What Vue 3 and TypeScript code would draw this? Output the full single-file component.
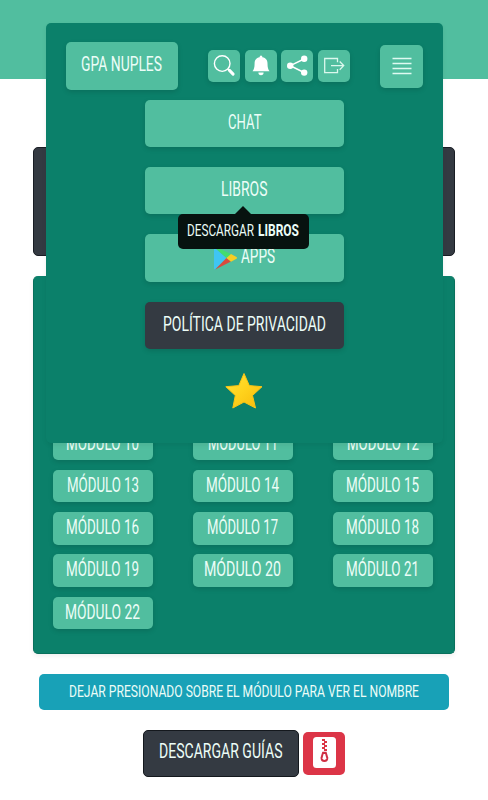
<script setup lang="ts">
import { h } from 'vue'

interface LabelProps { text: string; w: number; size?: number; bold?: boolean }

// Condensed caption: the glyphs are fitted to the requested width.
const Label = (p: LabelProps) =>
  h('svg', { class: ['label', p.bold ? 'label-bold' : ''], width: p.w, height: 24 }, [
    h('text', {
      x: 0, y: 18.5, 'font-size': p.size ?? 19.6,
      textLength: p.w, lengthAdjust: 'spacingAndGlyphs',
    }, p.text),
  ])
Label.props = ['text', 'w', 'size', 'bold']

const widths = [73, 70, 72, 72, 73, 73, 73, 71, 73, 73, 77, 73, 75]
const modules = widths.map((w, i) => ({ name: `MÓDULO ${i + 10}`, w }))
</script>

<template>
  <div class="page">
    <header class="top"></header>
    <section class="banner"></section>
    <section class="card">
      <div v-for="m in modules" :key="m.name" class="module"><Label :text="m.name" :w="m.w" /></div>
    </section>
    <div class="hint"><Label text="DEJAR PRESIONADO SOBRE EL MÓDULO PARA VER EL NOMBRE" :w="350" :size="16.8" /></div>
    <div class="downloads">
      <div class="guides"><Label text="DESCARGAR GUÍAS" :w="123.5" /></div>
      <div class="zip">
        <svg width="23" height="31" viewBox="0 0 23 31">
          <rect width="23" height="31" rx="3.5" fill="#fff" />
          <path d="M9 3h3M11 5h3M9 7h3M11 9h3M9 11h3M11 13h3" stroke="#dc3545" stroke-width="2" />
          <path d="M9.3 14.8h4.2l1.8 6q0 4.2-3.9 4.2t-3.9-4.2z" fill="#cf2f43" />
          <path d="M10.6 17h1.6l1.1 4.2q-.4 1.7-1.9 1.7t-1.9-1.7z" fill="#fff" />
        </svg>
      </div>
    </div>

    <nav class="menu">
      <div class="bar">
        <div class="btn brand"><Label text="GPA NUPLES" :w="81" /></div>
        <div class="icons">
          <div class="btn icon">
            <svg width="32" height="32" viewBox="0 0 32 32" fill="none" stroke="#fff">
              <circle cx="14.2" cy="13.6" r="7.8" stroke-width="1.4" />
              <path d="M19.8 19.2l1.8 1.6" stroke-width="1.6" />
              <path d="M21.5 20.4l3.6 3.7" stroke-width="3" stroke-linecap="round" />
            </svg>
          </div>
          <div class="btn icon">
            <svg width="32" height="32" viewBox="0 0 32 32" fill="#fff">
              <path d="M14.6 7.2q0-1.6 1.4-1.6t1.4 1.6c3.6.6 5.1 3.2 5.1 6.2 0 4 .7 6.1 2.1 7.8H7.5c1.4-1.7 2.1-3.8 2.1-7.8 0-3 1.4-5.6 5-6.2zM13.4 22.6h5.2a2.6 2.6 0 0 1-5.2 0z" />
            </svg>
          </div>
          <div class="btn icon">
            <svg width="32" height="32" viewBox="0 0 32 32" fill="#fff">
              <path d="M23 9L9.3 15.7 23 22.5" fill="none" stroke="#fff" stroke-width="1.5" />
              <circle cx="23.2" cy="8.8" r="3.2" /><circle cx="9.2" cy="15.7" r="3.2" /><circle cx="23.2" cy="22.6" r="3.2" />
            </svg>
          </div>
          <div class="btn icon">
            <svg width="32" height="32" viewBox="0 0 32 32" fill="none" stroke="#dcf8ed" stroke-width="1.3">
              <path d="M19.5 12.3V8.5H6.7v14.2h12.8v-3.6M13 15.6h12.5M21.7 11.5l4 4.1-4 4.1" />
            </svg>
          </div>
        </div>
        <div class="btn toggle">
          <svg width="20" height="18" viewBox="0 0 20 18" stroke="#dffaf1" stroke-width="1.7"><path d="M.5 1.5h19M.5 6.5h19M.5 11.5h19M.5 16.5h19" /></svg>
        </div>
      </div>
      <div class="links">
        <div class="btn link"><Label text="CHAT" :w="33.5" /></div>
        <div class="btn link">
          <Label text="LIBROS" :w="46.5" />
          <div class="tip"><Label text="DESCARGAR" :w="67" :size="17" /><Label text="LIBROS" :w="41" :size="17" :bold="true" /></div>
        </div>
        <div class="btn link apps">
          <svg class="play" width="24" height="24" viewBox="0 0 24 24">
            <path d="M0 1L12.5 12 1 23.5Q0 23 0 22z" fill="#3fc5f3" />
            <path d="M0 1Q.8.3 2 1L17.5 8.2 12.5 12z" fill="#43dc70" />
            <path d="M12.5 12L17 15.5 1.2 23.5z" fill="#d9493e" />
            <path d="M17 8L22.5 11q1.3.9 0 1.8L17 15.7 12.5 12z" fill="#f8cd24" />
          </svg>
          <Label text="APPS" :w="34" />
        </div>
        <div class="btn link privacy"><Label text="POLÍTICA DE PRIVACIDAD" :w="163" /></div>
      </div>
      <svg class="star" width="40" height="38" viewBox="0 0 40 38">
        <defs><linearGradient id="gold" x1="0" y1="0" x2="1" y2="1"><stop offset="0" stop-color="#ffe63b" /><stop offset=".5" stop-color="#ffd21c" /><stop offset="1" stop-color="#f6b90c" /></linearGradient></defs>
        <path d="M20 1.5L25.3 13.6 38 14.7 28.5 23.5 31.5 36 20 30 8.8 36 11.3 23.5 1.8 14.7 14.8 13.6z" fill="url(#gold)" stroke="#fbc414" stroke-width="1" stroke-linejoin="round" />
      </svg>
    </nav>
  </div>
</template>

<style>
body { background: #fff; }
.label { display: block; flex: none; overflow: visible; fill: #ecfdf7; font-family: Roboto, "Liberation Sans", sans-serif; font-weight: 400; }
.label-bold { font-weight: 700; }
</style>

<style scoped>
* { box-sizing: border-box; }
.page { position: relative; width: 488px; height: 800px; overflow: hidden; }
.top { height: 79px; background: #51be9f; }
.banner { height: 109px; margin: 68px 33px 20px; border: 1px solid #191d24; border-radius: 5px; background: #343a42; }
.card { display: grid; grid-template-columns: repeat(3, 99.5px); grid-auto-rows: 32.5px; gap: 9.8px 40.5px; align-content: start; width: 422px; height: 378px; margin-left: 33px; padding: 151.5px 20px 0 19px; border: 1px solid #08705c; border-width: 0 1px 1px; border-radius: 5px; background: #0b806a; box-shadow: 0 2px 5px #0001; }
.module, .btn { display: flex; justify-content: center; border-radius: 5px; background: #51be9f; box-shadow: 0 2px 5px #0002; }
.module { padding-top: 3px; }
.hint { display: flex; justify-content: center; width: 410px; height: 36px; margin: 20px 0 0 39px; padding-top: 3.7px; border-radius: 5px; background: #18a1b7; }
.downloads { display: flex; align-items: center; gap: 4.5px; margin: 19.5px 0 0 143px; }
.guides { display: flex; justify-content: center; width: 155.5px; height: 47.5px; padding-top: 8.5px; border: 1px solid #14181d; border-radius: 5px; background: #343a42; }
.zip { display: flex; justify-content: center; align-items: center; width: 42px; height: 43px; border-radius: 5px; background: #dc3547; padding-bottom: 1px; }
.menu { position: absolute; left: 46px; top: 23px; width: 397px; height: 420px; padding: 19px 20px 0 19.5px; border-radius: 5px; background: #0b806a; box-shadow: 0 2px 5px #0001; }
.bar { display: flex; align-items: center; justify-content: space-between; height: 48px; }
.brand { width: 112.5px; height: 47.5px; padding-top: 10px; }
.icons { display: flex; gap: 4.5px; }
.icon { width: 32px; height: 32px; }
.toggle { width: 43px; height: 43px; align-items: center; }
.links { display: flex; flex-direction: column; gap: 20px; width: 199px; margin: 10px 0 0 79.5px; }
.link { position: relative; height: 47.2px; padding-top: 10px; }
.privacy { background: #343a42; }
.apps { gap: 3px; }
.play { margin-top: 2px; flex: none; }
.tip { position: absolute; z-index: 2; left: 33px; top: 46.5px; width: 130.5px; height: 35.5px; padding: 3.7px 0 0; display: flex; justify-content: center; gap: 4px; border-radius: 5px; background: #07120f; }
.tip::before { content: ""; position: absolute; left: 57px; top: -7.5px; border: 8px solid transparent; border-top: 0; border-bottom-color: #07120f; }
.star { display: block; margin: 23.5px 0 0 158.5px; }
</style>
